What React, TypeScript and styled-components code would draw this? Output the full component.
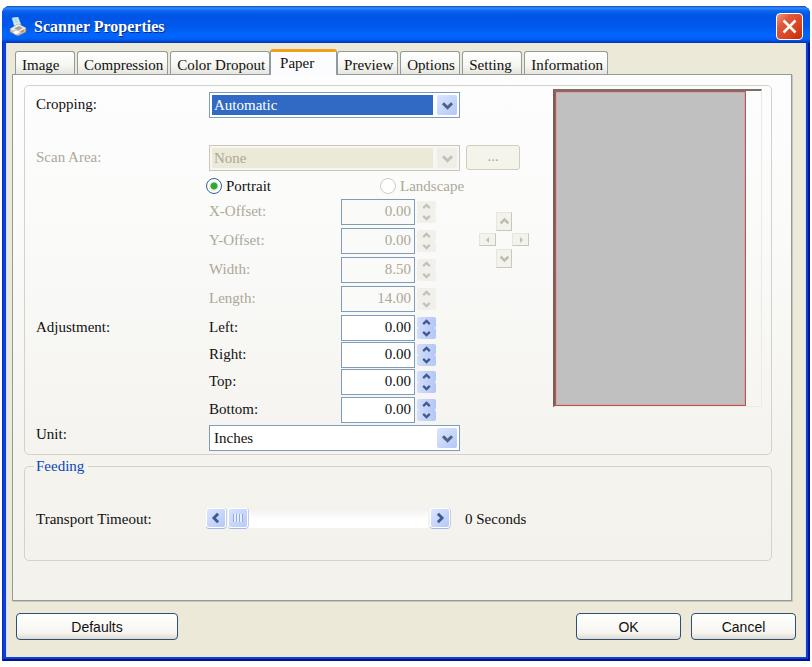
import React, { useState } from "react";
import styled, { createGlobalStyle, css } from "styled-components";

const GlobalStyle = createGlobalStyle`
  *, *::before, *::after { box-sizing: border-box; }
  html, body { margin: 0; background: #fff; }
  body {
    font-family: "Liberation Serif", "Times New Roman", serif;
    font-size: 15px;
    line-height: 18px;
    color: #101010;
  }
  button, input, select { font: inherit; color: inherit; margin: 0; }
  svg { display: block; }
`;

const Page = styled.main`
  padding: 6px 2px;
`;

const Dialog = styled.section`
  display: flex;
  flex-direction: column;
  min-width: 780px;
  background: #0a3fd8;
  border-radius: 8px 8px 0 0;
  box-shadow: inset 1px 0 #0a2bc0, inset -2px 0 #00139c, inset 0 -2px #00138c;
  overflow: hidden;
`;

const TitleBar = styled.header`
  display: flex;
  align-items: center;
  gap: 7px;
  height: 37px;
  padding: 4px 7px 0 7px;
  background: linear-gradient(
    #1248b8 0,
    #2f8cff 2px,
    #0a63ee 5px,
    #0055e5 10px,
    #0058ea 20px,
    #0066ff 29px,
    #0060f8 33px,
    #003fc6 36px,
    #0036b0 37px
  );
`;

const Title = styled.h1`
  flex: 1;
  margin: 0;
  font-size: 16px;
  line-height: 20px;
  font-weight: 700;
  color: #fff;
  text-shadow: 1px 1px #0a2a80;
`;

const CloseButton = styled.button`
  display: grid;
  place-items: center;
  width: 27px;
  height: 27px;
  padding: 0;
  border: 1px solid #fff;
  border-radius: 4px;
  background: linear-gradient(135deg, #ef9a80 0, #e0583a 30%, #d8401c 70%, #b83010 100%);
`;

const Body = styled.div`
  margin: 0 4px 4px;
  padding-top: 6px;
  background: #ece9d8;
  border-left: 1px solid #d6dff0;
  border-right: 1px solid #d6dff0;
`;

const TabList = styled.div`
  display: flex;
  align-items: flex-end;
  gap: 2px;
  padding: 0 8px;
`;

const Tab = styled.button<{ $active: boolean }>`
  min-width: 60px;
  height: 23px;
  padding: 3px 4px 0 6px;
  text-align: left;
  line-height: 18px;
  white-space: nowrap;
  border: 1px solid #919b9c;
  border-bottom: 0;
  border-radius: 3px 3px 0 0;
  background: linear-gradient(#fff, #f6f6f2 60%, #e6e6df);
  ${(p) =>
    p.$active &&
    css`
      z-index: 1;
      width: 67px;
      height: 26px;
      margin: 0 -2px -1px;
      padding: 0 9px 2px;
      border-top: 3px solid #f0a11c;
      background: #fcfcfe;
    `}
`;

const Panel = styled.div`
  margin: 0 13px 0 5px;
  padding: 10px 19px 39px 11px;
  border: 1px solid #919b9c;
  box-shadow: 1px 1px #c8c6b8;
  background: linear-gradient(#fdfdfe 0, #fbfbfa 25%, #f4f3ee 75%, #f3f2ec 100%);
`;

const groupFrame = css`
  margin: 0;
  min-width: 0;
  border: 1px solid #d4d3c8;
  border-radius: 5px;
`;

const PaperGroup = styled.section`
  ${groupFrame}
  display: flex;
  justify-content: space-between;
  padding: 6px 9px 3px 11px;
`;

const FeedingGroup = styled.fieldset`
  ${groupFrame}
  display: flex;
  align-items: center;
  margin-top: 2px;
  padding: 33px 11px 31px;
`;

const Legend = styled.legend`
  margin-left: -2px;
  padding: 0 4px 0 2px;
  color: #0c46b8;
`;

const Form = styled.div`
  flex: 1;
  display: grid;
  grid-template-columns: 173px 132px 119px 1fr;
  grid-template-rows: 26px 27px 26px 28px repeat(4, 29px) repeat(2, 27px) repeat(2, 28px) 26px;
  align-items: start;
`;

const Caption = styled.span<{ $row: number; $column: number; $muted?: boolean }>`
  grid-row: ${(p) => p.$row};
  grid-column: ${(p) => p.$column};
  line-height: 24px;
  color: ${(p) => (p.$muted ? "#aca899" : "inherit")};
`;

const UnitCaption = styled(Caption)`
  line-height: 18px;
`;

const ComboBox = styled.div<{ $row: number; $disabled?: boolean }>`
  grid-row: ${(p) => p.$row};
  grid-column: 2 / 4;
  display: grid;
  grid-template-columns: 1fr 20px;
  height: 26px;
  padding: 2px;
  border: 1px solid ${(p) => (p.$disabled ? "#c9c7ba" : "#7f9db9")};
  background: ${(p) => (p.$disabled ? "#f7f6f0" : "#fff")};
`;

const Select = styled.select<{ $fill: string; $ink: string }>`
  grid-area: 1 / 1 / 2 / 3;
  appearance: none;
  height: 20px;
  padding: 0 26px 0 2px;
  border: 0;
  border-radius: 0;
  outline: 0;
  opacity: 1;
  color: ${(p) => p.$ink};
  background: linear-gradient(${(p) => p.$fill}, ${(p) => p.$fill}) left / calc(100% - 24px) 100% no-repeat;
`;

const ArrowFace = styled.span<{ $disabled?: boolean }>`
  grid-area: 1 / 2;
  display: grid;
  place-items: center;
  height: 20px;
  border-radius: 2px;
  pointer-events: none;
  background: ${(p) => (p.$disabled ? "#efeee8" : "linear-gradient(135deg, #dbe5ff, #b4c8f6)")};
  color: ${(p) => (p.$disabled ? "#c4c2b6" : "#4d6185")};
`;

const BrowseButton = styled.button`
  grid-row: 3;
  grid-column: 4;
  width: 54px;
  height: 25px;
  margin-left: 6px;
  padding: 0 0 4px;
  line-height: 18px;
  border: 1px solid #cfcdc0;
  border-radius: 3px;
  background: #f5f4ea;
  color: #aca899;
`;

const Choice = styled.label<{ $muted?: boolean }>`
  display: flex;
  align-items: center;
  gap: 4px;
  color: ${(p) => (p.$muted ? "#aca899" : "inherit")};
`;

const Orientation = styled.div`
  grid-row: 4;
  grid-column: 2 / 5;
  display: grid;
  grid-template-columns: 174px 1fr;
  margin-left: -3px;
  padding-top: 6px;
`;

const Radio = styled.input`
  appearance: none;
  width: 16px;
  height: 16px;
  border: 1px solid #365f94;
  border-radius: 50%;
  background: radial-gradient(circle, #2fa52f 0, #35a835 3px, #e8f2e4 4px, #fff 6px);
  &:disabled {
    border-color: #d0cec2;
    background: #fff;
  }
`;

const Spinner = styled.div<{ $row: number }>`
  grid-row: ${(p) => p.$row};
  grid-column: 3;
  display: flex;
  align-items: center;
  gap: 2px;
`;

const NumberBox = styled.input`
  width: 74px;
  height: 26px;
  padding: 0 3px 2px;
  text-align: right;
  border: 1px solid #7f9db9;
  border-radius: 0;
  background: #fff;
  &:disabled {
    color: #aca899;
    background: #fafaf8;
  }
`;

const StepButtons = styled.div`
  display: grid;
  grid-template-rows: 11px 11px;
`;

const StepButton = styled.button`
  display: grid;
  place-items: center;
  width: 19px;
  padding: 0;
  border: 0;
  border-radius: 2px;
  color: #40598c;
  background: linear-gradient(90deg, #d2defd, #b3c6f5);
  &:disabled {
    color: #c4c2b6;
    background: #f1f0eb;
  }
`;

const Pad = styled.div`
  grid-row: 5 / 9;
  grid-column: 4;
  display: grid;
  grid-template-columns: 17px 16px 17px;
  grid-template-rows: 20px 17px 20px;
  margin: 12px 0 0 19px;
`;

const PadButton = styled.button<{ $column: number; $row: number; $flat?: boolean }>`
  grid-column: ${(p) => p.$column};
  grid-row: ${(p) => p.$row};
  align-self: center;
  display: grid;
  place-items: center;
  width: 100%;
  height: ${(p) => (p.$flat ? 13 : 19)}px;
  padding: 0;
  border: 1px solid #e8e6dc;
  border-right-color: #c9c7ba;
  border-bottom-color: #c9c7ba;
  color: #c0beb1;
  background: #f3f2ec;
`;

const Preview = styled.div`
  flex: 0 0 209px;
  display: flex;
  height: 318px;
  margin-top: -3px;
  padding-right: 15px;
  border: 1px solid #ecebe2;
  border-top: 2px solid #77706a;
  border-left: 2px solid #77605c;
`;

const Sheet = styled.div`
  flex: 1;
  border: 1px solid #b0585a;
  box-shadow: inset 0 0 0 1px #d6a6a6;
  background: #c0c0c0;
`;

const FeedLabel = styled.label`
  width: 170px;
`;

const ScrollBar = styled.div`
  display: flex;
  gap: 2px;
  width: 244px;
  height: 21px;
`;

const scrollFace = css`
  border: 1px solid #fff;
  border-radius: 3px;
  box-shadow: 0 1px #a9b9de, 1px 0 #c3cfea;
`;

const ScrollButton = styled.button`
  ${scrollFace}
  display: grid;
  place-items: center;
  flex: 0 0 20px;
  height: 20px;
  padding: 0;
  color: #40598c;
  background: linear-gradient(135deg, #dbe5ff, #b4c8f6);
`;

const ScrollTrack = styled.input`
  appearance: none;
  flex: 1;
  min-width: 0;
  height: 20px;
  background: linear-gradient(#f3f1ee, #fff 60%);
  &::-webkit-slider-thumb {
    ${scrollFace}
    appearance: none;
    width: 20px;
    height: 20px;
    background:
      repeating-linear-gradient(90deg, #90a9e4 0, #90a9e4 1px, #e6eeff 1px, #e6eeff 3px) center / 10px 8px no-repeat,
      linear-gradient(135deg, #d6e2ff, #b7caf8);
  }
`;

const Output = styled.output`
  margin-left: 15px;
`;

const Footer = styled.footer`
  display: flex;
  gap: 10px;
  padding: 12px 9px 17px;
`;

const PushButton = styled.button<{ $wide?: boolean }>`
  width: ${(p) => (p.$wide ? 162 : 105)}px;
  height: 27px;
  margin-right: ${(p) => (p.$wide ? "auto" : 0)};
  padding: 0;
  font-family: "Liberation Sans", Arial, sans-serif;
  font-size: 14px;
  line-height: 18px;
  border: 1px solid #2f4f78;
  border-radius: 4px;
  background: linear-gradient(#fff, #f6f5f0 75%, #dedace);
`;

type Direction = "up" | "down" | "left" | "right";

const chevrons: Record<Direction, string> = {
  up: "M2 6.5 5 3.5 8 6.5",
  down: "M2 3.5 5 6.5 8 3.5",
  left: "M6.5 2 3.5 5 6.5 8",
  right: "M3.5 2 6.5 5 3.5 8",
};

function Chevron({ direction, size }: { direction: Direction; size: number }) {
  return (
    <svg width={size} height={size} viewBox="0 0 10 10" fill="none" stroke="currentColor" strokeWidth="2" aria-hidden="true">
      <path d={chevrons[direction]} />
    </svg>
  );
}

function SmallArrow({ direction }: { direction: "left" | "right" }) {
  return (
    <svg width="8" height="8" viewBox="0 0 8 8" fill="currentColor" aria-hidden="true">
      <path d={direction === "left" ? "M5 1v6L2 4z" : "M3 1v6l3-3z"} />
    </svg>
  );
}

function ScannerIcon() {
  return (
    <svg width="18" height="20" viewBox="0 0 18 20" aria-hidden="true">
      <path d="M3 1 9 0l3 8-6 3z" fill="#d5efff" stroke="#8fc4ee" strokeWidth=".7" />
      <path d="m5 3 3-.5M6 5l3-.5" stroke="#7db4e0" strokeWidth=".8" />
      <path d="m1 12 8-5 8 4v4l-8 4-8-4z" fill="#c9c5be" stroke="#77716b" strokeWidth=".7" />
      <path d="m1 12 8-5 8 4-8 4z" fill="#efece5" />
      <path d="m5 11.500 5-2.500 4 2-5 2.500z" fill="#a8a29a" />
      <path d="m3 15 5-2 4 2-5 3z" fill="#fff" stroke="#9fa7b5" strokeWidth=".5" />
      <path d="m12 15 3-1.500" stroke="#d08a3c" strokeWidth="1.500" />
    </svg>
  );
}

interface ComboProps {
  row: number;
  label: string;
  options: string[];
  disabled?: boolean;
  highlighted?: boolean;
}

function Combo({ row, label, options, disabled, highlighted }: ComboProps) {
  const fill = highlighted ? "#316ac5" : disabled ? "#ebe9d7" : "#ffffff";
  const ink = highlighted ? "#ffffff" : disabled ? "#aca899" : "#101010";
  return (
    <ComboBox $row={row} $disabled={disabled}>
      <Select aria-label={label} disabled={disabled} $fill={fill} $ink={ink}>
        {options.map((option) => (
          <option key={option}>{option}</option>
        ))}
      </Select>
      <ArrowFace $disabled={disabled}>
        <Chevron direction="down" size={15} />
      </ArrowFace>
    </ComboBox>
  );
}

interface SpinFieldProps {
  row: number;
  label: string;
  initial: number;
  disabled?: boolean;
}

function SpinField({ row, label, initial, disabled }: SpinFieldProps) {
  const [value, setValue] = useState(initial.toFixed(2));
  const id = `field-${label.toLowerCase()}`;
  const step = (delta: number) => setValue(((Number(value) || 0) + delta).toFixed(2));
  return (
    <>
      <Caption as="label" htmlFor={id} $row={row} $column={2} $muted={disabled}>
        {label}:
      </Caption>
      <Spinner $row={row}>
        <NumberBox id={id} value={value} disabled={disabled} onChange={(e) => setValue(e.target.value)} />
        <StepButtons>
          <StepButton type="button" aria-label={`Increase ${label}`} disabled={disabled} onClick={() => step(0.01)}>
            <Chevron direction="up" size={11} />
          </StepButton>
          <StepButton type="button" aria-label={`Decrease ${label}`} disabled={disabled} onClick={() => step(-0.01)}>
            <Chevron direction="down" size={11} />
          </StepButton>
        </StepButtons>
      </Spinner>
    </>
  );
}

const tabs = ["Image", "Compression", "Color Dropout", "Paper", "Preview", "Options", "Setting", "Information"];

const areaFields = [
  { label: "X-Offset", initial: 0 },
  { label: "Y-Offset", initial: 0 },
  { label: "Width", initial: 8.5 },
  { label: "Length", initial: 14 },
];

const adjustmentFields = ["Left", "Right", "Top", "Bottom"];

export default function App() {
  const [timeout, setTimeoutSeconds] = useState(0);
  return (
    <>
      <GlobalStyle />
      <Page>
        <Dialog role="dialog" aria-labelledby="dialog-title">
          <TitleBar>
            <ScannerIcon />
            <Title id="dialog-title">Scanner Properties</Title>
            <CloseButton type="button" aria-label="Close">
              <svg width="15" height="15" viewBox="0 0 15 15" stroke="#fff" strokeWidth="2.500" aria-hidden="true">
                <path d="m1.500 1.500 12 12m0-12-12 12" />
              </svg>
            </CloseButton>
          </TitleBar>
          <Body>
            <TabList role="tablist">
              {tabs.map((tab) => (
                <Tab key={tab} type="button" role="tab" aria-selected={tab === "Paper"} $active={tab === "Paper"}>
                  {tab}
                </Tab>
              ))}
            </TabList>
            <Panel role="tabpanel" aria-label="Paper">
              <PaperGroup>
                <Form>
                  <Caption $row={1} $column={1}>Cropping:</Caption>
                  <Combo row={1} label="Cropping" options={["Automatic"]} highlighted />
                  <Caption $row={3} $column={1} $muted>Scan Area:</Caption>
                  <Combo row={3} label="Scan Area" options={["None"]} disabled />
                  <BrowseButton type="button" disabled>...</BrowseButton>
                  <Orientation role="radiogroup" aria-label="Orientation">
                    <Choice>
                      <Radio type="radio" name="orientation" defaultChecked />
                      Portrait
                    </Choice>
                    <Choice $muted>
                      <Radio type="radio" name="orientation" disabled />
                      Landscape
                    </Choice>
                  </Orientation>
                  {areaFields.map((field, i) => (
                    <SpinField key={field.label} row={5 + i} label={field.label} initial={field.initial} disabled />
                  ))}
                  <Pad role="group" aria-label="Move scan area">
                    <PadButton type="button" aria-label="Move up" disabled $column={2} $row={1}>
                      <Chevron direction="up" size={13} />
                    </PadButton>
                    <PadButton type="button" aria-label="Move left" disabled $column={1} $row={2} $flat>
                      <SmallArrow direction="left" />
                    </PadButton>
                    <PadButton type="button" aria-label="Move right" disabled $column={3} $row={2} $flat>
                      <SmallArrow direction="right" />
                    </PadButton>
                    <PadButton type="button" aria-label="Move down" disabled $column={2} $row={3}>
                      <Chevron direction="down" size={13} />
                    </PadButton>
                  </Pad>
                  <Caption $row={9} $column={1}>Adjustment:</Caption>
                  {adjustmentFields.map((label, i) => (
                    <SpinField key={label} row={9 + i} label={label} initial={0} />
                  ))}
                  <UnitCaption $row={13} $column={1}>Unit:</UnitCaption>
                  <Combo row={13} label="Unit" options={["Inches"]} />
                </Form>
                <Preview>
                  <Sheet />
                </Preview>
              </PaperGroup>
              <FeedingGroup>
                <Legend>Feeding</Legend>
                <FeedLabel htmlFor="transport-timeout">Transport Timeout:</FeedLabel>
                <ScrollBar>
                  <ScrollButton type="button" aria-label="Decrease timeout" onClick={() => setTimeoutSeconds(Math.max(0, timeout - 1))}>
                    <Chevron direction="left" size={14} />
                  </ScrollButton>
                  <ScrollTrack
                    id="transport-timeout"
                    type="range"
                    min={0}
                    max={30}
                    value={timeout}
                    onChange={(e) => setTimeoutSeconds(Number(e.target.value))}
                  />
                  <ScrollButton type="button" aria-label="Increase timeout" onClick={() => setTimeoutSeconds(Math.min(30, timeout + 1))}>
                    <Chevron direction="right" size={14} />
                  </ScrollButton>
                </ScrollBar>
                <Output htmlFor="transport-timeout">{timeout} Seconds</Output>
              </FeedingGroup>
            </Panel>
            <Footer>
              <PushButton type="button" $wide>Defaults</PushButton>
              <PushButton type="button">OK</PushButton>
              <PushButton type="button">Cancel</PushButton>
            </Footer>
          </Body>
        </Dialog>
      </Page>
    </>
  );
}
